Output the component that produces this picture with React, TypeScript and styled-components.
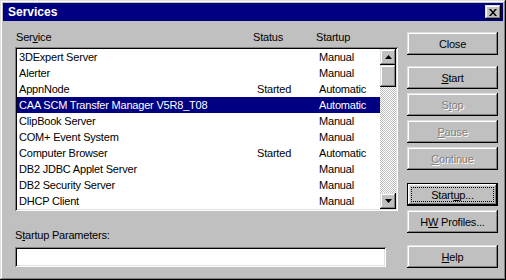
import styled, { createGlobalStyle, css } from 'styled-components';

const GlobalStyle = createGlobalStyle`
  html, body {
    margin: 0;
    padding: 0;
    background: #c0c0c0;
  }
  body {
    font-family: "Liberation Sans", Arial, sans-serif;
    font-size: 11px;
    letter-spacing: -0.2px;
    color: #000;
  }
`;

const bevelOut = css`
  background: #c0c0c0;
  box-shadow:
    inset -1px -1px #000,
    inset 1px 1px #dfdfdf,
    inset -2px -2px #808080,
    inset 2px 2px #fff;
`;

const bevelIn = css`
  box-shadow:
    inset 1px 1px #808080,
    inset -1px -1px #fff,
    inset 2px 2px #000,
    inset -2px -2px #dfdfdf;
`;

const Window = styled.div`
  width: 506px;
  height: 280px;
  box-sizing: border-box;
  padding: 3px;
  ${bevelOut};
  display: flex;
  flex-direction: column;
`;

const TitleBar = styled.div`
  height: 18px;
  background: #000080;
  color: #fff;
  display: flex;
  align-items: center;
  justify-content: space-between;
  padding: 0 2px 0 5px;
`;

const Title = styled.span`
  font-weight: bold;
  font-size: 12px;
  letter-spacing: 0;
`;

const TitleButton = styled.div`
  width: 16px;
  height: 14px;
  ${bevelOut};
  display: flex;
  align-items: center;
  justify-content: center;
`;

const Body = styled.div`
  flex: 1;
  display: flex;
  gap: 9px;
  padding: 0 5px 0 12px;
`;

const LeftPane = styled.div`
  width: 383px;
  display: flex;
  flex-direction: column;
  padding-top: 10px;
`;

const HeaderRow = styled.div`
  height: 16px;
  display: grid;
  grid-template-columns: 237px 63px 1fr;
  align-items: start;
  line-height: 13px;
  padding-left: 1px;
`;

const ListBox = styled.div`
  height: 164px;
  box-sizing: border-box;
  padding: 2px;
  background: #fff;
  ${bevelIn};
  display: flex;
`;

const Rows = styled.div`
  flex: 1;
  display: flex;
  flex-direction: column;
`;

const Row = styled.div<{ $selected?: boolean }>`
  height: 16px;
  display: grid;
  grid-template-columns: 238px 62px 1fr;
  align-items: center;
  background: ${p => (p.$selected ? '#000080' : 'transparent')};
  color: ${p => (p.$selected ? '#fff' : '#000')};
`;

const Cell = styled.span`
  padding-left: 2px;
  white-space: nowrap;
`;

const ScrollBar = styled.div`
  width: 16px;
  display: flex;
  flex-direction: column;
`;

const ScrollButton = styled.div`
  height: 16px;
  ${bevelOut};
  display: flex;
  align-items: center;
  justify-content: center;
`;

const Thumb = styled.div`
  height: 22px;
  ${bevelOut};
`;

const Track = styled.div`
  flex: 1;
  background: repeating-conic-gradient(#c0c0c0 0% 25%, #fff 0% 50%) 0 0 / 2px 2px;
`;

const FieldLabel = styled.div`
  margin-top: 18px;
  line-height: 13px;
`;

const EditField = styled.div`
  margin-top: 5px;
  width: 371px;
  height: 20px;
  background: #fff;
  ${bevelIn};
`;

const ButtonColumn = styled.div`
  width: 91px;
  display: flex;
  flex-direction: column;
  padding-top: 11px;
`;

const Button = styled.div<{ $disabled?: boolean; $default?: boolean; $gap?: number }>`
  position: relative;
  height: 23px;
  box-sizing: border-box;
  margin-top: ${p => p.$gap ?? 4}px;
  ${bevelOut};
  display: flex;
  align-items: center;
  justify-content: center;
  color: ${p => (p.$disabled ? '#808080' : '#000')};
  text-shadow: ${p => (p.$disabled ? '1px 1px #fff' : 'none')};
  ${p =>
    p.$default &&
    css`
      box-shadow:
        inset 0 0 0 1px #000,
        inset -2px -2px #000,
        inset 2px 2px #fff,
        inset -3px -3px #808080,
        inset 3px 3px #dfdfdf;
    `}
`;

const FocusRing = styled.span`
  position: absolute;
  inset: 4px;
  border: 1px dotted #000;
`;

const Key = styled.span`
  text-decoration: underline;
`;

const Arrow = ({ up }: { up?: boolean }) => (
  <svg width="7" height="4" viewBox="0 0 7 4">
    <path d={up ? 'M3.5 0 L7 4 L0 4 Z' : 'M0 0 L7 0 L3.5 4 Z'} fill="#000" />
  </svg>
);

const services = [
  { name: '3DExpert Server', status: '', startup: 'Manual' },
  { name: 'Alerter', status: '', startup: 'Manual' },
  { name: 'AppnNode', status: 'Started', startup: 'Automatic' },
  { name: 'CAA SCM Transfer Manager V5R8_T08', status: '', startup: 'Automatic', selected: true },
  { name: 'ClipBook Server', status: '', startup: 'Manual' },
  { name: 'COM+ Event System', status: '', startup: 'Manual' },
  { name: 'Computer Browser', status: 'Started', startup: 'Automatic' },
  { name: 'DB2 JDBC Applet Server', status: '', startup: 'Manual' },
  { name: 'DB2 Security Server', status: '', startup: 'Manual' },
  { name: 'DHCP Client', status: '', startup: 'Manual' },
];

export default function App() {
  return (
    <>
      <GlobalStyle />
      <Window>
        <TitleBar>
          <Title>Services</Title>
          <TitleButton>
            <svg width="8" height="7" viewBox="0 0 8 7">
              <path d="M0 0 L2 0 L4 2.5 L6 0 L8 0 L5 3.5 L8 7 L6 7 L4 4.5 L2 7 L0 7 L3 3.5 Z" fill="#000" />
            </svg>
          </TitleButton>
        </TitleBar>
        <Body>
          <LeftPane>
            <HeaderRow>
              <span>
                Ser<Key>v</Key>ice
              </span>
              <span>Status</span>
              <span>Startup</span>
            </HeaderRow>
            <ListBox>
              <Rows>
                {services.map(s => (
                  <Row key={s.name} $selected={s.selected}>
                    <Cell>{s.name}</Cell>
                    <Cell>{s.status}</Cell>
                    <Cell>{s.startup}</Cell>
                  </Row>
                ))}
              </Rows>
              <ScrollBar>
                <ScrollButton>
                  <Arrow up />
                </ScrollButton>
                <Thumb />
                <Track />
                <ScrollButton>
                  <Arrow />
                </ScrollButton>
              </ScrollBar>
            </ListBox>
            <FieldLabel>
              S<Key>t</Key>artup Parameters:
            </FieldLabel>
            <EditField />
          </LeftPane>
          <ButtonColumn>
            <Button $gap={0}>Close</Button>
            <Button $gap={11}>
              <span>
                <Key>S</Key>tart
              </span>
            </Button>
            <Button $disabled>
              <span>
                S<Key>t</Key>op
              </span>
            </Button>
            <Button $disabled>
              <span>
                <Key>P</Key>ause
              </span>
            </Button>
            <Button $disabled>
              <span>
                <Key>C</Key>ontinue
              </span>
            </Button>
            <Button $gap={13} $default>
              <FocusRing />
              <span>
                Start<Key>u</Key>p...
              </span>
            </Button>
            <Button>
              <span>
                H<Key>W</Key> Profiles...
              </span>
            </Button>
            <Button $gap={12}>
              <span>
                <Key>H</Key>elp
              </span>
            </Button>
          </ButtonColumn>
        </Body>
      </Window>
    </>
  );
}
